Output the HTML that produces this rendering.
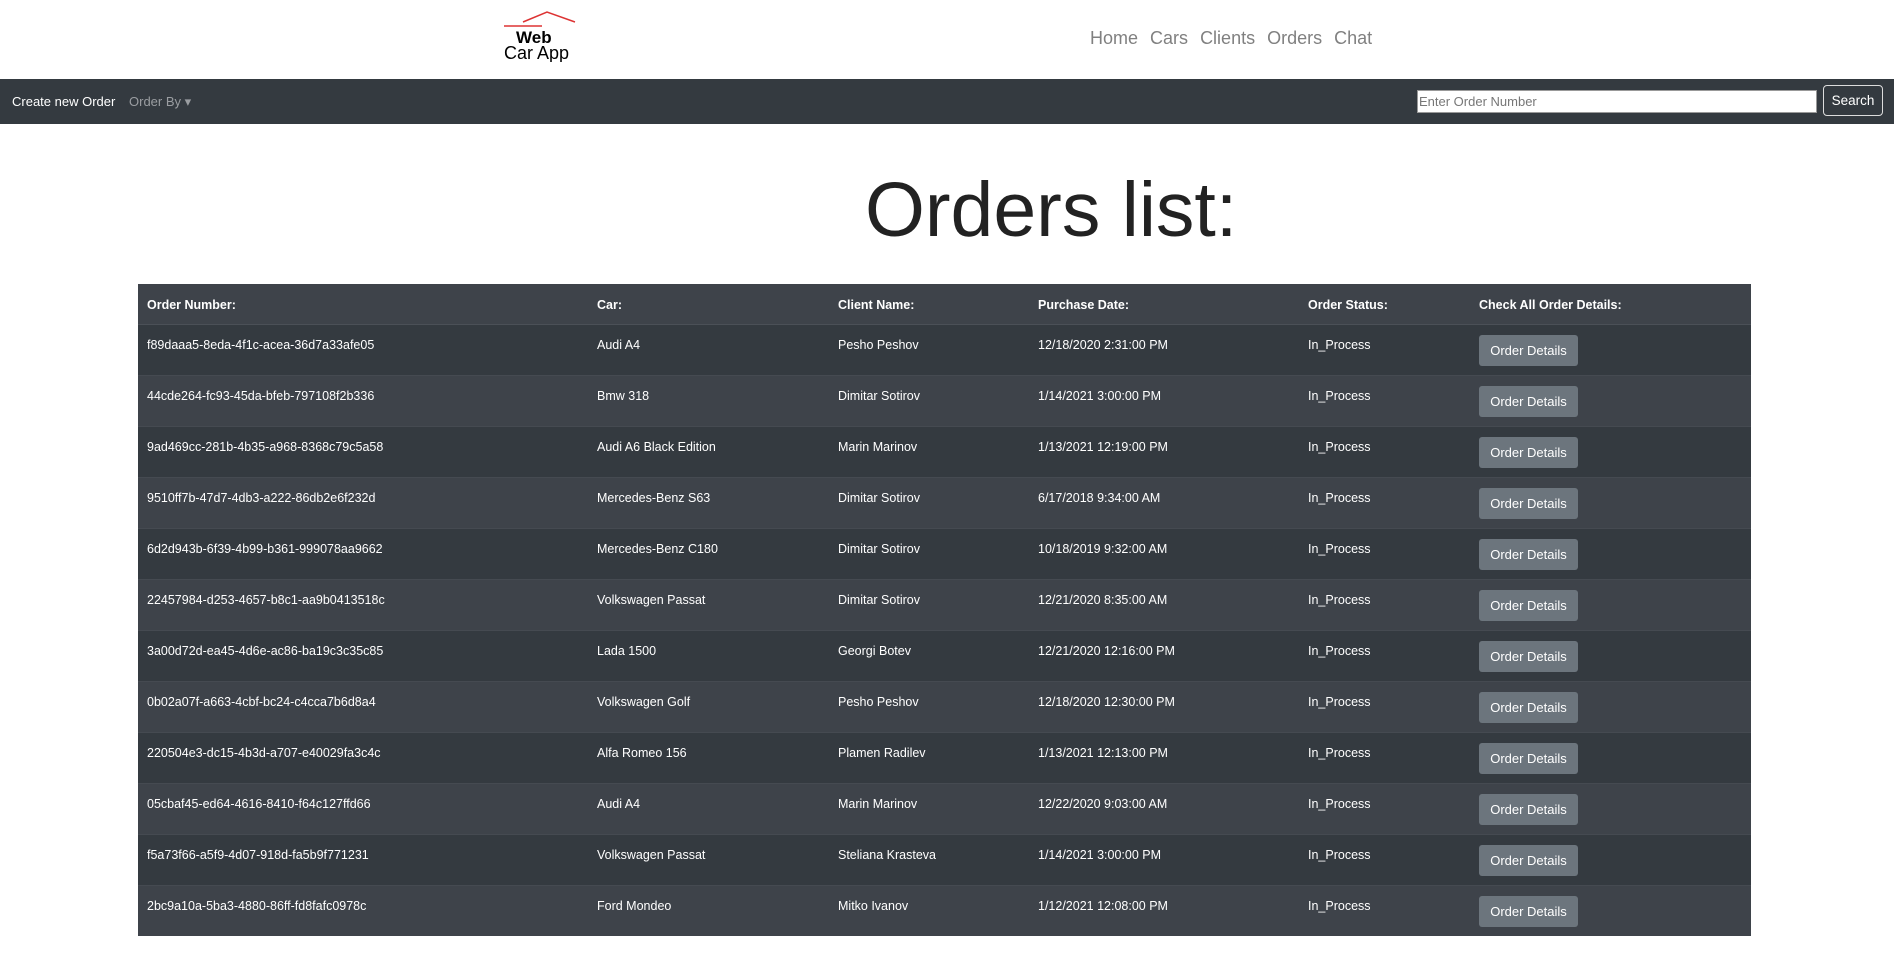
<!DOCTYPE html>
<html><head><meta charset="utf-8"><style>
*{box-sizing:border-box;margin:0;padding:0}
body{width:1894px;height:954px;background:#fff;font-family:"Liberation Sans",sans-serif;position:relative;overflow:hidden}
.logo{position:absolute;left:500px;top:8px;width:82px;height:54px}
.nav{position:absolute;left:1090px;top:28px;font-size:18px;color:#808080}
.nav span{margin-right:7px}
.bar{position:absolute;left:0;top:79px;width:1894px;height:45px;background:#343a40}
.bar .a{position:absolute;left:12px;top:15px;color:#fff;font-size:13px}
.bar .b{position:absolute;left:129px;top:15px;color:#9a9da1;font-size:13px}
.inp{position:absolute;left:1417px;top:11px;width:400px;height:23px;background:#fff;border:1px solid #999;font-size:13px;color:#777;padding:3px 1px}
.btn{position:absolute;left:1823px;top:6px;width:60px;height:31px;border:1px solid #ddd;border-radius:4px;color:#fff;font-size:13.5px;text-align:center;line-height:29px}
h1{position:absolute;left:865px;top:166px;font-weight:normal;font-size:77px;color:#222}
table{position:absolute;left:138px;top:284px;width:1613px;border-collapse:collapse;color:#fff;font-size:12.5px}
th{height:40px;text-align:left;padding:14px 0 0 9px;vertical-align:top;background:#3e434a;font-size:12.5px;border-bottom:1px solid #4b5057}
td{height:51px;padding:13px 0 0 9px;vertical-align:top;border-top:1px solid #454a51}
tr:nth-child(odd) td{background:#343a40}
tr:nth-child(even) td{background:#3e434a}
td.o{padding-top:10px}
.ob{display:inline-block;background:#6c757d;color:#fff;border-radius:3px;width:99px;height:31px;line-height:31px;text-align:center;font-size:13px}
</style></head><body>
<svg class="logo" viewBox="0 0 82 54"><path d="M4 18 H42" stroke="#d33" stroke-width="1.5"/><path d="M23 14 L47 4 L75 14" stroke="#d33" stroke-width="1.5" fill="none"/>
<text x="16" y="35" font-family="Liberation Sans" font-weight="bold" font-size="17" fill="#000">Web</text>
<text x="4" y="51" font-family="Liberation Sans" font-size="18" fill="#000">Car App</text></svg>
<div class="nav"><span>Home</span> <span>Cars</span> <span>Clients</span> <span>Orders</span> <span>Chat</span></div>
<div class="bar"><div class="a">Create new Order</div><div class="b">Order By ▾</div>
<div class="inp">Enter Order Number</div><div class="btn">Search</div></div>
<h1>Orders list:</h1>
<table>
<colgroup><col style="width:450px"><col style="width:241px"><col style="width:200px"><col style="width:270px"><col style="width:171px"><col></colgroup>
<thead><tr><th>Order Number:</th><th>Car:</th><th>Client Name:</th><th>Purchase Date:</th><th>Order Status:</th><th>Check All Order Details:</th></tr></thead>
<tbody>
<tr><td>f89daaa5-8eda-4f1c-acea-36d7a33afe05</td><td>Audi A4</td><td>Pesho Peshov</td><td>12/18/2020 2:31:00 PM</td><td>In_Process</td><td class="o"><span class="ob">Order Details</span></td></tr>
<tr><td>44cde264-fc93-45da-bfeb-797108f2b336</td><td>Bmw 318</td><td>Dimitar Sotirov</td><td>1/14/2021 3:00:00 PM</td><td>In_Process</td><td class="o"><span class="ob">Order Details</span></td></tr>
<tr><td>9ad469cc-281b-4b35-a968-8368c79c5a58</td><td>Audi A6 Black Edition</td><td>Marin Marinov</td><td>1/13/2021 12:19:00 PM</td><td>In_Process</td><td class="o"><span class="ob">Order Details</span></td></tr>
<tr><td>9510ff7b-47d7-4db3-a222-86db2e6f232d</td><td>Mercedes-Benz S63</td><td>Dimitar Sotirov</td><td>6/17/2018 9:34:00 AM</td><td>In_Process</td><td class="o"><span class="ob">Order Details</span></td></tr>
<tr><td>6d2d943b-6f39-4b99-b361-999078aa9662</td><td>Mercedes-Benz C180</td><td>Dimitar Sotirov</td><td>10/18/2019 9:32:00 AM</td><td>In_Process</td><td class="o"><span class="ob">Order Details</span></td></tr>
<tr><td>22457984-d253-4657-b8c1-aa9b0413518c</td><td>Volkswagen Passat</td><td>Dimitar Sotirov</td><td>12/21/2020 8:35:00 AM</td><td>In_Process</td><td class="o"><span class="ob">Order Details</span></td></tr>
<tr><td>3a00d72d-ea45-4d6e-ac86-ba19c3c35c85</td><td>Lada 1500</td><td>Georgi Botev</td><td>12/21/2020 12:16:00 PM</td><td>In_Process</td><td class="o"><span class="ob">Order Details</span></td></tr>
<tr><td>0b02a07f-a663-4cbf-bc24-c4cca7b6d8a4</td><td>Volkswagen Golf</td><td>Pesho Peshov</td><td>12/18/2020 12:30:00 PM</td><td>In_Process</td><td class="o"><span class="ob">Order Details</span></td></tr>
<tr><td>220504e3-dc15-4b3d-a707-e40029fa3c4c</td><td>Alfa Romeo 156</td><td>Plamen Radilev</td><td>1/13/2021 12:13:00 PM</td><td>In_Process</td><td class="o"><span class="ob">Order Details</span></td></tr>
<tr><td>05cbaf45-ed64-4616-8410-f64c127ffd66</td><td>Audi A4</td><td>Marin Marinov</td><td>12/22/2020 9:03:00 AM</td><td>In_Process</td><td class="o"><span class="ob">Order Details</span></td></tr>
<tr><td>f5a73f66-a5f9-4d07-918d-fa5b9f771231</td><td>Volkswagen Passat</td><td>Steliana Krasteva</td><td>1/14/2021 3:00:00 PM</td><td>In_Process</td><td class="o"><span class="ob">Order Details</span></td></tr>
<tr><td>2bc9a10a-5ba3-4880-86ff-fd8fafc0978c</td><td>Ford Mondeo</td><td>Mitko Ivanov</td><td>1/12/2021 12:08:00 PM</td><td>In_Process</td><td class="o"><span class="ob">Order Details</span></td></tr>
</tbody></table>
</body></html>
